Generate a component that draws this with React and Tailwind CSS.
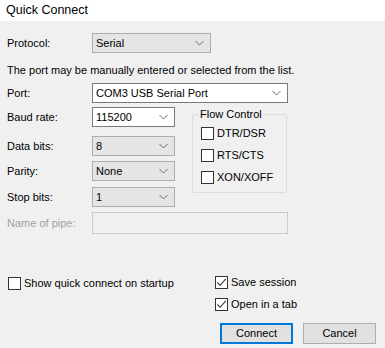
import React from "react";

const Chevron = () => (
  <svg width="9" height="6" viewBox="0 0 9 6" className="shrink-0">
    <path d="M0.5 1 L4.5 5 L8.5 1" fill="none" stroke="#6b6b6b" strokeWidth="1" />
  </svg>
);

const Select = ({ value, white, className }) => (
  <div
    className={
      "flex items-center justify-between h-[20px] pl-[3px] pr-[6px] border " +
      (white ? "bg-white border-[#7a7a7a] " : "bg-[#e5e5e5] border-[#adadad] ") +
      className
    }
  >
    <span>{value}</span>
    <Chevron />
  </div>
);

const Check = ({ checked }) => (
  <div className="w-[13px] h-[13px] border border-[#333333] bg-white flex items-center justify-center shrink-0">
    {checked && (
      <svg width="11" height="11" viewBox="0 0 11 11">
        <path d="M1.5 5.5 L4.2 8.3 L9.8 1.8" fill="none" stroke="#333333" strokeWidth="1.1" />
      </svg>
    )}
  </div>
);

const CheckRow = ({ label, checked }) => (
  <div className="flex items-center gap-[3px] h-[13px]">
    <Check checked={checked} />
    <span className="leading-none">{label}</span>
  </div>
);

const Label = ({ children, disabled }) => (
  <div className={"w-[85px] shrink-0 " + (disabled ? "text-[#a0a0a0]" : "")}>{children}</div>
);

export default function App() {
  return (
    <div
      className="w-[385px] h-[348px] bg-[#f0f0f0] text-black text-[11px] overflow-hidden flex flex-col"
      style={{ fontFamily: '"Liberation Sans", Arial, sans-serif' }}
    >
      <div className="h-[21px] bg-white pl-[6px] flex items-center text-[12.5px] shrink-0">Quick Connect</div>

      <div className="px-[7px] flex flex-col">
        <div className="flex items-center mt-[12px]">
          <Label>Protocol:</Label>
          <Select value="Serial" className="w-[119px]" />
        </div>

        <div className="mt-[10px] h-[14px] leading-[14px]">
          The port may be manually entered or selected from the list.
        </div>

        <div className="flex items-center mt-[6px]">
          <Label>Port:</Label>
          <Select value="COM3 USB Serial Port" white className="w-[196px]" />
        </div>

        <div className="flex mt-[4px]">
          <div className="flex flex-col">
            <div className="flex items-center">
              <Label>Baud rate:</Label>
              <Select value="115200" white className="w-[83px]" />
            </div>
            <div className="flex items-center mt-[9px]">
              <Label>Data bits:</Label>
              <Select value="8" className="w-[83px]" />
            </div>
            <div className="flex items-center mt-[5px]">
              <Label>Parity:</Label>
              <Select value="None" className="w-[83px]" />
            </div>
            <div className="flex items-center mt-[6px]">
              <Label>Stop bits:</Label>
              <Select value="1" className="w-[83px]" />
            </div>
          </div>

          <fieldset className="ml-[17px] w-[95px] h-[86px] border border-[#dcdcdc] rounded-[2px] px-[8px]">
            <legend className="px-[2px] ml-[-3px] leading-[14px]">Flow Control</legend>
            <div className="flex flex-col gap-[9px] mt-[6px]">
              <CheckRow label="DTR/DSR" />
              <CheckRow label="RTS/CTS" />
              <CheckRow label="XON/XOFF" />
            </div>
          </fieldset>
        </div>

        <div className="flex items-center mt-[5px]">
          <Label disabled>Name of pipe:</Label>
          <div className="w-[196px] h-[22px] border border-[#cccccc] bg-[#f0f0f0]" />
        </div>

        <div className="flex mt-[42px]">
          <div className="w-[208px] pl-[1px] pt-[1px]">
            <CheckRow label="Show quick connect on startup" />
          </div>
          <div className="flex flex-col gap-[9px]">
            <CheckRow label="Save session" checked />
            <CheckRow label="Open in a tab" checked />
          </div>
        </div>

        <div className="flex justify-end gap-[10px] mt-[12px] pr-[2px]">
          <div className="w-[73px] h-[21px] bg-[#e1e1e1] border-2 border-[#0078d7] flex items-center justify-center">Connect</div>
          <div className="w-[73px] h-[21px] bg-[#e1e1e1] border border-[#adadad] flex items-center justify-center">Cancel</div>
        </div>
      </div>
    </div>
  );
}
